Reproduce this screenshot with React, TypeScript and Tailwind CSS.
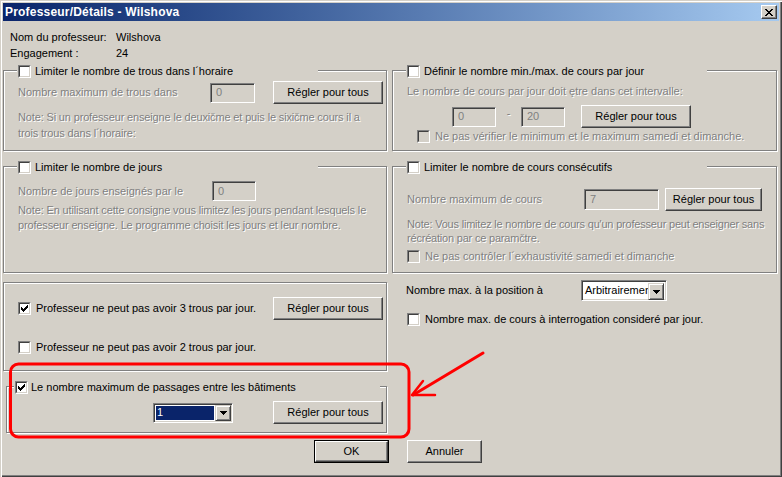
import React from "react";

const DIS = "text-[#808080] [text-shadow:1px_1px_0_#fff]";

function CheckMark() {
  const cols = [2, 3, 4, 3, 2, 1, 0];
  return (
    <svg width="7" height="7" viewBox="0 0 7 7" shapeRendering="crispEdges">
      {cols.map((s, c) => (
        <rect key={c} x={c} y={s} width="1" height="3" fill="#000" />
      ))}
    </svg>
  );
}

function Check({ checked = false, disabled = false }: { checked?: boolean; disabled?: boolean }) {
  return (
    <div className="w-[13px] h-[13px] shrink-0 border border-t-[#808080] border-l-[#808080] border-b-white border-r-white">
      <div
        className={`w-full h-full border border-t-[#404040] border-l-[#404040] border-b-[#d4d0c8] border-r-[#d4d0c8] flex items-center justify-center ${
          disabled ? "bg-[#d4d0c8]" : "bg-white"
        }`}
      >
        {checked && <CheckMark />}
      </div>
    </div>
  );
}

function Btn({ className = "", children }: { className?: string; children: React.ReactNode }) {
  return (
    <div
      className={`h-[23px] shrink-0 border border-t-white border-l-white border-b-[#404040] border-r-[#404040] shadow-[inset_-1px_-1px_0_#808080] flex items-center justify-center text-black whitespace-nowrap ${className}`}
    >
      {children}
    </div>
  );
}

function Field({ className = "", children }: { className?: string; children?: React.ReactNode }) {
  return (
    <div
      className={`shrink-0 border border-t-[#808080] border-l-[#808080] border-b-white border-r-white shadow-[inset_1px_1px_0_#404040,inset_-1px_-1px_0_#d4d0c8] ${className}`}
    >
      {children}
    </div>
  );
}

function Arrow() {
  return (
    <svg width="7" height="4" viewBox="0 0 7 4" shapeRendering="crispEdges">
      <rect x="0" y="0" width="7" height="1" fill="#000" />
      <rect x="1" y="1" width="5" height="1" fill="#000" />
      <rect x="2" y="2" width="3" height="1" fill="#000" />
      <rect x="3" y="3" width="1" height="1" fill="#000" />
    </svg>
  );
}

function DropBtn({ className = "" }: { className?: string }) {
  return (
    <div
      className={`w-[16px] shrink-0 border border-t-[#d4d0c8] border-l-[#d4d0c8] border-b-[#404040] border-r-[#404040] shadow-[inset_1px_1px_0_#fff,inset_-1px_-1px_0_#808080] bg-[#d4d0c8] flex items-center justify-center ${className}`}
    >
      <Arrow />
    </div>
  );
}

function Group({
  className = "",
  title,
  children,
}: {
  className?: string;
  title?: React.ReactNode;
  children?: React.ReactNode;
}) {
  return (
    <div className={`relative shrink-0 border border-[#808080] shadow-[inset_1px_1px_0_#fff,1px_1px_0_#fff] ${className}`}>
      {title}
      {children}
    </div>
  );
}

function Title({ text, checked = false }: { text: string; checked?: boolean }) {
  return (
    <div className="absolute left-[13px] top-[-6px] w-[301px] h-[13px] bg-[#d4d0c8] flex items-center">
      <div className="ml-[1px]">
        <Check checked={checked} />
      </div>
      <span className="ml-[4px] whitespace-nowrap">{text}</span>
    </div>
  );
}

export default function App() {
  return (
    <div className="relative w-[782px] h-[477px] overflow-hidden p-[3px] bg-[#d4d0c8] shadow-[inset_1px_1px_0_#d4d0c8,inset_2px_2px_0_#fff,inset_-1px_-1px_0_#404040,inset_-2px_-2px_0_#808080] font-['Liberation_Sans',Arial,sans-serif] text-[11px] leading-[13px] text-black">
      {/* Title bar */}
      <div className="h-[18px] flex items-center justify-between pl-[2px] pr-[2px] bg-linear-to-r from-[#0a246a] to-[#a6caf0]">
        <span className="text-white font-bold text-[12px] leading-[14px] tracking-[0.2px] whitespace-nowrap">Professeur/Détails - Wilshova</span>
        <div className="w-[16px] h-[14px] border border-t-white border-l-white border-b-[#404040] border-r-[#404040] shadow-[inset_-1px_-1px_0_#808080] bg-[#d4d0c8] flex items-center justify-center">
          <svg width="8" height="7" viewBox="0 0 8 7" shapeRendering="crispEdges">
            {[0, 1, 2, 3, 4, 5, 6].map((i) => (
              <g key={i}>
                <rect x={i} y={i} width="2" height="1" fill="#000" />
                <rect x={6 - i} y={i} width="2" height="1" fill="#000" />
              </g>
            ))}
          </svg>
        </div>
      </div>

      {/* Info rows */}
      <div className="mt-[8px] pl-[7px]">
        <div className="flex h-[16px] items-center">
          <span className="w-[106px]">Nom du professeur:</span>
          <span>Wilshova</span>
        </div>
        <div className="flex h-[16px] items-center">
          <span className="w-[106px]">Engagement :</span>
          <span>24</span>
        </div>
      </div>

      {/* Columns */}
      <div className="mt-[9px] flex items-start gap-[5px]">
        {/* Left column */}
        <div className="w-[384px] flex flex-col">
          <Group className="h-[81px]" title={<Title text="Limiter le nombre de trous dans l´horaire" />}>
            <div className="mt-[10px] flex items-center h-[23px] pl-[14px]">
              <span className={`w-[192px] whitespace-nowrap ${DIS}`}>Nombre maximum de trous dans</span>
              <Field className="w-[45px] h-[20px] bg-[#d4d0c8] pl-[5px] flex items-center text-[#808080]">0</Field>
              <Btn className="ml-[18px] w-[110px]">Régler pour tous</Btn>
            </div>
            <div className={`mt-[5px] pl-[14px] leading-[16px] tracking-[-0.15px] whitespace-nowrap ${DIS}`}>
              <div>Note: Si un professeur enseigne le deuxičme et puis le sixičme cours il a</div>
              <div>trois trous dans l´horaire:</div>
            </div>
          </Group>

          <Group className="mt-[15px] h-[107px]" title={<Title text="Limiter le nombre de jours" />}>
            <div className="mt-[14px] flex items-center h-[20px] pl-[14px]">
              <span className={`w-[194px] whitespace-nowrap ${DIS}`}>Nombre de jours enseignés par le</span>
              <Field className="w-[44px] h-[20px] bg-[#d4d0c8] pl-[5px] flex items-center text-[#808080]">0</Field>
            </div>
            <div className={`mt-[2px] pl-[14px] leading-[15px] tracking-[-0.15px] whitespace-nowrap ${DIS}`}>
              <div>Note: En utilisant cette consigne vous limitez les jours pendant lesquels le</div>
              <div>professeur enseigne. Le programme choisit les jours et leur nombre.</div>
            </div>
          </Group>

          <Group className="mt-[9px] h-[89px]">
            <div className="mt-[14px] flex items-center h-[23px] pl-[14px]">
              <div className="w-[255px] flex items-center">
                <Check checked />
                <span className="ml-[5px] whitespace-nowrap">Professeur ne peut pas avoir 3 trous par jour.</span>
              </div>
              <Btn className="w-[110px]">Régler pour tous</Btn>
            </div>
            <div className="mt-[21px] flex items-center h-[13px] pl-[14px]">
              <Check />
              <span className="ml-[5px] whitespace-nowrap">Professeur ne peut pas avoir 2 trous par jour.</span>
            </div>
          </Group>

          <Group
            className="mt-[15px] ml-[3px] w-[381px] h-[47px]"
            title={
              <div className="absolute left-[7px] top-[-6px] w-[366px] h-[13px] bg-[#d4d0c8] flex items-center">
                <div className="ml-[1px]">
                  <Check checked />
                </div>
                <span className="ml-[3px] whitespace-nowrap">Le nombre maximum de passages entre les bâtiments</span>
              </div>
            }
          >
            <div className="mt-[14px] flex items-center h-[23px] pl-[146px]">
              <Field className="w-[80px] h-[20px] bg-white flex">
                <div className="flex-1 p-[1px] bg-white ml-[1px] mt-[1px] mb-[1px]">
                  <div className="h-full bg-[#0a246a] text-white pl-[1px] flex items-center">1</div>
                </div>
                <DropBtn className="h-[16px] mt-[1px] mr-[1px]" />
              </Field>
              <Btn className="ml-[40px] w-[110px]">Régler pour tous</Btn>
            </div>
          </Group>
        </div>

        {/* Right column */}
        <div className="w-[385px] flex flex-col">
          <Group className="h-[81px]" title={<Title text="Définir le nombre min./max. de cours par jour" />}>
            <div className={`mt-[13px] pl-[14px] leading-[14px] whitespace-nowrap ${DIS}`}>
              Le nombre de cours par jour doit ętre dans cet intervalle:
            </div>
            <div className="mt-[7px] flex items-center h-[23px] pl-[59px]">
              <Field className="w-[44px] h-[20px] bg-[#d4d0c8] pl-[5px] flex items-center text-[#808080]">0</Field>
              <span className={`w-[25px] text-center mb-[6px] ${DIS}`}>-</span>
              <Field className="w-[44px] h-[20px] bg-[#d4d0c8] pl-[5px] flex items-center text-[#808080]">20</Field>
              <Btn className="ml-[16px] w-[110px]">Régler pour tous</Btn>
            </div>
            <div className="mt-[2px] flex items-center h-[13px] pl-[24px]">
              <Check disabled />
              <span className={`ml-[5px] whitespace-nowrap ${DIS}`}>Ne pas vérifier le minimum et le maximum samedi et dimanche.</span>
            </div>
          </Group>

          <Group className="mt-[15px] h-[107px]" title={<Title text="Limiter le nombre de cours consécutifs" />}>
            <div className="mt-[21px] flex items-center h-[23px] pl-[14px]">
              <span className={`w-[177px] whitespace-nowrap ${DIS}`}>Nombre maximum de cours</span>
              <Field className="w-[75px] h-[21px] bg-[#d4d0c8] pl-[5px] flex items-center text-[#808080]">7</Field>
              <Btn className="ml-[6px] w-[97px]">Régler pour tous</Btn>
            </div>
            <div className={`mt-[6px] pl-[14px] leading-[14px] tracking-[-0.2px] whitespace-nowrap ${DIS}`}>
              <div>Note: Vous limitez le nombre de cours qu'un professeur peut enseigner sans</div>
              <div>récréation par ce paramčtre.</div>
            </div>
            <div className="mt-[5px] flex items-center h-[13px] pl-[14px]">
              <Check disabled />
              <span className={`ml-[5px] whitespace-nowrap ${DIS}`}>Ne pas contrôler l´exhaustivité samedi et dimanche</span>
            </div>
          </Group>

          <div className="mt-[7px] flex items-center h-[21px] pl-[14px]">
            <span className="w-[175px] whitespace-nowrap">Nombre max. à la position à</span>
            <Field className="w-[86px] h-[21px] bg-white flex p-[2px]">
              <div className="flex-1 overflow-hidden whitespace-nowrap pl-[1px] flex items-center">Arbitrairement</div>
              <DropBtn className="h-[17px]" />
            </Field>
          </div>
          <div className="mt-[12px] flex items-center h-[13px] pl-[15px]">
            <Check />
            <span className="ml-[5px] whitespace-nowrap">Nombre max. de cours à interrogation consideré par jour.</span>
          </div>
        </div>
      </div>

      {/* Bottom buttons */}
      <div className="mt-[7px] flex pl-[311px]">
        <div className="w-[75px] h-[23px] border border-black">
          <div className="w-full h-full border border-t-white border-l-white border-b-[#404040] border-r-[#404040] shadow-[inset_-1px_-1px_0_#808080] flex items-center justify-center">
            OK
          </div>
        </div>
        <Btn className="ml-[18px] w-[75px]">Annuler</Btn>
      </div>

      {/* Red annotation overlay */}
      <svg className="absolute left-0 top-0 pointer-events-none" width="782" height="477" viewBox="0 0 782 477">
        <rect x="10.5" y="364" width="398.5" height="73" rx="8" ry="8" fill="none" stroke="#ff0000" strokeWidth="3" />
        <path d="M483 353 L413 395" fill="none" stroke="#ff0000" strokeWidth="3" strokeLinecap="round" />
        <path d="M423 381 L412 395 L435 395" fill="none" stroke="#ff0000" strokeWidth="2.5" strokeLinecap="round" strokeLinejoin="round" />
      </svg>
    </div>
  );
}
